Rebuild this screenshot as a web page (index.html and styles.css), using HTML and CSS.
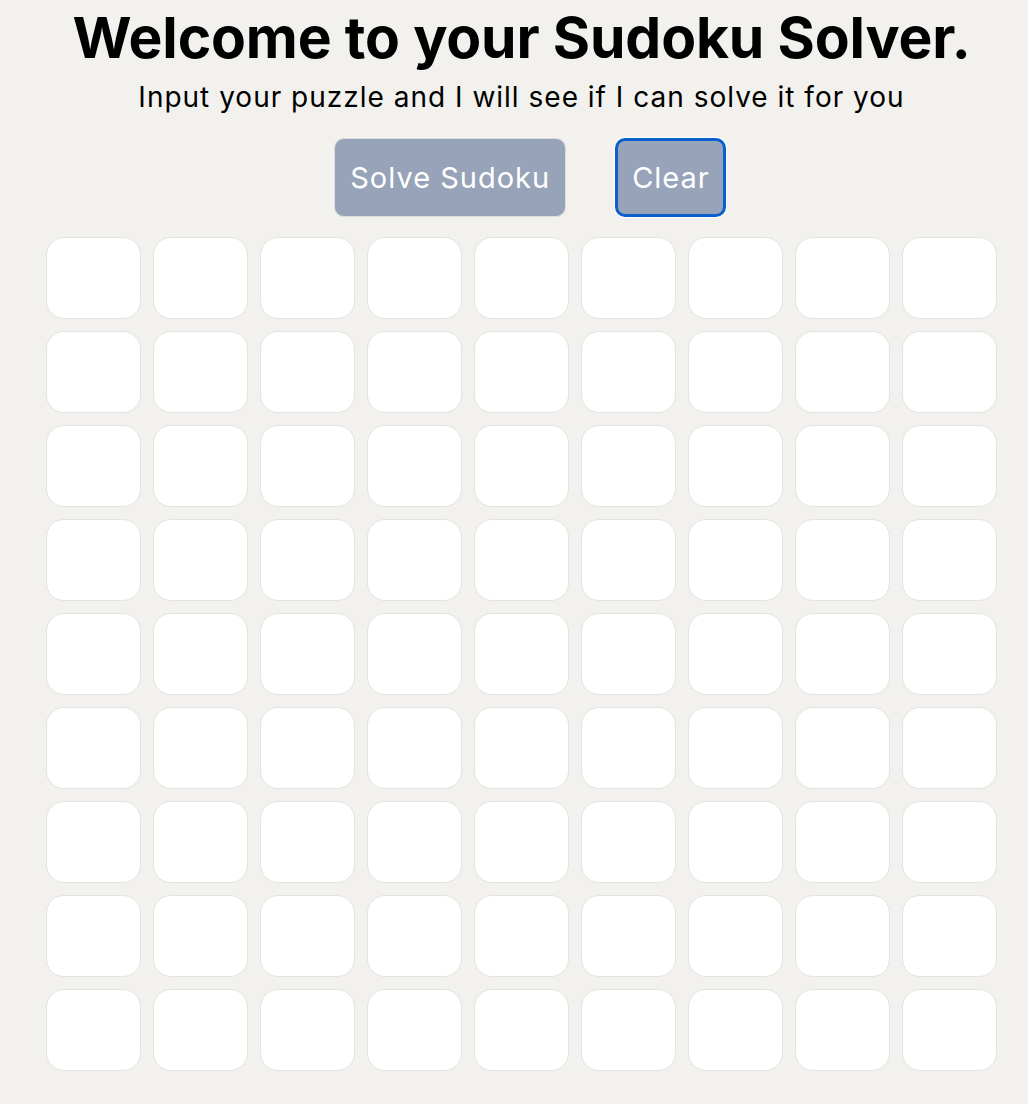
FILE: index.html
```html
<!DOCTYPE html>
<html>
<head>
<meta charset="utf-8">
<link rel="stylesheet" href="styles.css">
</head>
<body>
<main class="page">
  <h1 class="title">Welcome to your Sudoku Solver.</h1>
  <p class="subtitle">Input your puzzle and I will see if I can solve it for you</p>
  <div class="actions">
    <button class="btn">Solve Sudoku</button>
    <button class="btn btn-focus">Clear</button>
  </div>
  <div class="board">
    <input class="cell"><input class="cell"><input class="cell"><input class="cell"><input class="cell"><input class="cell"><input class="cell"><input class="cell"><input class="cell">
    <input class="cell"><input class="cell"><input class="cell"><input class="cell"><input class="cell"><input class="cell"><input class="cell"><input class="cell"><input class="cell">
    <input class="cell"><input class="cell"><input class="cell"><input class="cell"><input class="cell"><input class="cell"><input class="cell"><input class="cell"><input class="cell">
    <input class="cell"><input class="cell"><input class="cell"><input class="cell"><input class="cell"><input class="cell"><input class="cell"><input class="cell"><input class="cell">
    <input class="cell"><input class="cell"><input class="cell"><input class="cell"><input class="cell"><input class="cell"><input class="cell"><input class="cell"><input class="cell">
    <input class="cell"><input class="cell"><input class="cell"><input class="cell"><input class="cell"><input class="cell"><input class="cell"><input class="cell"><input class="cell">
    <input class="cell"><input class="cell"><input class="cell"><input class="cell"><input class="cell"><input class="cell"><input class="cell"><input class="cell"><input class="cell">
    <input class="cell"><input class="cell"><input class="cell"><input class="cell"><input class="cell"><input class="cell"><input class="cell"><input class="cell"><input class="cell">
    <input class="cell"><input class="cell"><input class="cell"><input class="cell"><input class="cell"><input class="cell"><input class="cell"><input class="cell"><input class="cell">
  </div>
</main>
</body>
</html>
```
FILE: styles.css
```css
html, body {
  margin: 0;
  padding: 0;
  background: #f2f1ee;
}
body {
  font-family: Inter, "Liberation Sans", sans-serif;
  color: #000;
}
.page {
  width: 951px;
  margin-left: 46px;
  display: flex;
  flex-direction: column;
  align-items: center;
}
.title {
  margin: 0;
  padding-top: 6px;
  font-size: 57px;
  line-height: 64px;
  font-weight: 700;
  letter-spacing: -0.15px;
}
.subtitle {
  margin: 10px 0 0;
  font-size: 28px;
  line-height: 34px;
  font-weight: 400;
  letter-spacing: 1px;
}
.actions {
  display: flex;
  gap: 49px;
  margin-top: 24px;
  padding-left: 17px;
}
.btn {
  font-family: Inter, "Liberation Sans", sans-serif;
  font-size: 29px;
  letter-spacing: 1px;
  color: #fff;
  background: #97a3b9;
  border: 1px solid #dcdcdc;
  border-radius: 10px;
  height: 79px;
  padding: 0 15px 0 15px;
}
.btn-focus {
  border: 3px solid #0b5fcc;
  box-shadow: 0 0 0 1px #fff;
  padding: 0 13px 0 14px;
}
.board {
  margin-top: 20px;
  display: grid;
  grid-template-columns: repeat(9, 95px);
  grid-auto-rows: 82px;
  gap: 12px;
}
.cell {
  box-sizing: border-box;
  width: 95px;
  height: 82px;
  margin: 0;
  background: #fff;
  border: 1px solid #e3e3e3;
  border-radius: 18px;
  outline: none;
  font-size: 28px;
  text-align: center;
}
```
